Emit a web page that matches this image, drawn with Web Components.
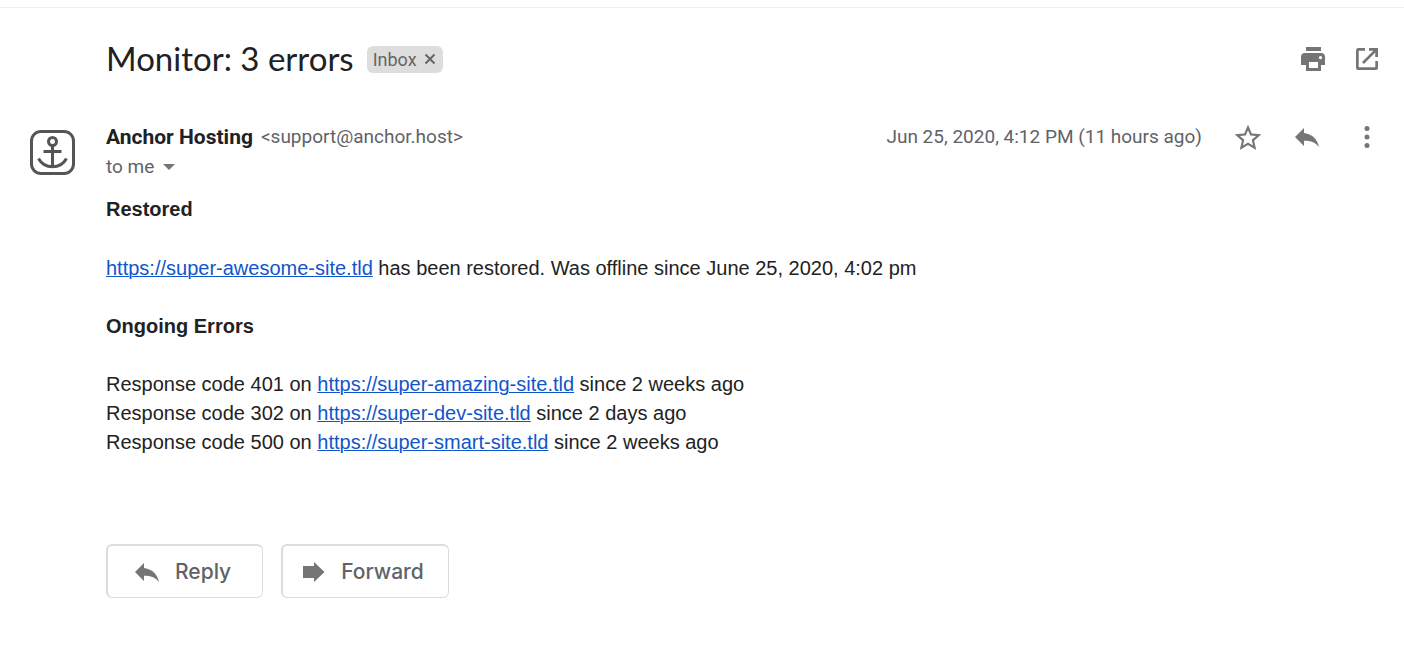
<!DOCTYPE html>
<html lang="en">
<head>
<meta charset="utf-8">
<meta name="viewport" content="width=device-width, initial-scale=1">
<title>Monitor: 3 errors</title>
<style>
body { margin: 0; background: #fff; color: #202124; font-family: Roboto, "Liberation Sans", sans-serif; }
</style>
</head>
<body>
<mail-thread></mail-thread>

<template id="icon-button">
<style>
:host { display: inline-flex; }
button { display: grid; place-items: center; width: 30px; height: 30px; padding: 0; border: 0; background: none; color: #757575; cursor: pointer; }
svg { display: block; fill: currentColor; }
</style>
<button type="button"></button>
</template>

<template id="mail-label">
<style>
:host { display: inline-flex; align-items: center; height: 27px; padding: 0 6px; gap: 6px; border-radius: 6px; background: #ddd; color: #666; font-size: 18px; line-height: 27px; }
button { display: grid; place-items: center; width: 14px; height: 27px; padding: 0; border: 0; background: none; color: inherit; cursor: pointer; }
svg { display: block; }
</style>
<slot></slot>
<button type="button" aria-label="Remove label"><svg width="14" height="14" viewBox="0 0 14 14" fill="none" stroke="currentColor" stroke-width="2"><path d="M2.500 2.500l9 9M11.500 2.500l-9 9"/></svg></button>
</template>

<template id="mail-subject">
<style>
:host { display: flex; align-items: center; justify-content: space-between; height: 42px; padding: 0 22px 0 106px; }
.subject, .tools { display: flex; align-items: center; }
.subject { gap: 13px; }
.tools { gap: 24px; }
h1 { margin: 0; padding-bottom: 2px; font: 400 33px/40px Lato, sans-serif; }
</style>
<div class="subject"><h1><slot></slot></h1><mail-label>Inbox</mail-label></div>
<div class="tools">
<icon-button name="print" label="Print all"></icon-button>
<icon-button name="open" label="In new window"></icon-button>
</div>
</template>

<template id="mail-sender">
<style>
:host { display: flex; align-items: flex-start; padding: 0 22px 0 30px; color: #5f6368; font-size: 19px; line-height: 30px; }
.avatar { flex: none; width: 45px; height: 45px; margin: 8px 31px 0 0; }
.who { flex: 1; }
.from { display: flex; align-items: center; gap: 8px; }
h2 { margin: 0; font: 700 21px/30px Roboto, sans-serif; color: #202124; }
.to { display: flex; align-items: center; gap: 9px; padding: 0; border: 0; background: none; font: inherit; color: inherit; cursor: pointer; }
.actions { display: flex; align-items: center; gap: 30px; }
svg { display: block; }
</style>
<svg class="avatar" viewBox="0 0 45 45" fill="none" stroke="#555" role="img" aria-label="Anchor Hosting">
<rect x="1.500" y="1.500" width="42" height="42" rx="9.500" stroke-width="3"/>
<circle cx="22.500" cy="11.500" r="4" stroke-width="3"/>
<path d="M22.500 15.500V37M13.500 21.500h18M8.500 28.500c6 11 22 11 28 0" stroke-width="3"/>
</svg>
<div class="who">
<div class="from"><h2>Anchor Hosting</h2><span>&lt;support@anchor.host&gt;</span></div>
<button class="to" type="button" aria-label="to me, show details">to me <svg width="12" height="6" viewBox="0 0 12 6" fill="#757575"><path d="M0 0h12L6 6z"/></svg></button>
</div>
<div class="actions">
<time datetime="2020-06-25T16:12">Jun 25, 2020, 4:12 PM (11 hours ago)</time>
<icon-button name="star" label="Star"></icon-button>
<icon-button name="reply" label="Reply"></icon-button>
<icon-button name="more" label="More"></icon-button>
</div>
</template>

<template id="mail-body">
<style>
:host { display: flex; flex-direction: column; gap: 29px; padding: 0 22px 0 106px; color: #222; font: 20px/29px "Liberation Sans", Arial, sans-serif; }
h3, p, ul { margin: 0; padding: 0; font-size: 20px; list-style: none; }
p { line-height: 30px; }
a { color: #15c; text-decoration: underline 1px; }
</style>
<h3>Restored</h3>
<p><a href="https://super-awesome-site.tld">https://super-awesome-site.tld</a> has been restored. Was offline since June 25, 2020, 4:02 pm</p>
<h3>Ongoing Errors</h3>
<ul>
<li>Response code 401 on <a href="https://super-amazing-site.tld">https://super-amazing-site.tld</a> since 2 weeks ago</li>
<li>Response code 302 on <a href="https://super-dev-site.tld">https://super-dev-site.tld</a> since 2 days ago</li>
<li>Response code 500 on <a href="https://super-smart-site.tld">https://super-smart-site.tld</a> since 2 weeks ago</li>
</ul>
</template>

<template id="mail-action">
<style>
:host { display: inline-flex; }
button { display: flex; align-items: center; gap: 16px; height: 54px; padding: 0 24px 0 20px; border: 2px solid #dadce0; border-right-width: 1px; border-bottom-width: 1px; border-radius: 6px; background: #fff; color: #5f6368; font: 500 21px/30px Inter, sans-serif; cursor: pointer; }
:host([name="reply"]) button { padding: 0 31px 0 27px; }
svg { display: block; fill: #757575; }
</style>
<button type="button"><span class="glyph"></span><slot></slot></button>
</template>

<template id="mail-thread">
<style>
:host { display: block; padding-top: 7px; }
.top { border-top: 1px solid #ececec; padding-top: 30px; }
mail-sender { margin-top: 42px; }
mail-body { margin-top: 13px; }
nav { display: flex; gap: 18px; padding: 87px 22px 64px 106px; }
</style>
<main class="top">
<mail-subject>Monitor: 3 errors</mail-subject>
<mail-sender></mail-sender>
<mail-body></mail-body>
<nav aria-label="Respond">
<mail-action name="reply">Reply</mail-action>
<mail-action name="forward">Forward</mail-action>
</nav>
</main>
</template>

<script>
const icons = {
  print: '<svg width="24" height="24" viewBox="0 0 24 24"><path d="M5 0h15v4H5zM4 6h16a4 4 0 0 1 4 4v8h-4v6H5v-6H0v-8a4 4 0 0 1 4-4zM8 15v6h9v-6zM19.500 9a1.600 1.600 0 1 0 .01 0z" fill-rule="evenodd"/></svg>',
  open: '<svg width="22" height="22" viewBox="0 0 22 22"><path d="M9 0v2.700H2.700v16.600h16.600V13H22v6.500a2.500 2.500 0 0 1-2.500 2.500h-17A2.500 2.500 0 0 1 0 19.500v-17A2.500 2.500 0 0 1 2.500 0zM13 0h9v9h-2.700V4.600L7.900 16 6 14.100 17.400 2.700H13z"/></svg>',
  star: '<svg width="32" height="32" viewBox="0 0 24 24"><path d="M22 9.240l-7.190-.62L12 2 9.190 8.630 2 9.240l5.460 4.730L5.820 21 12 17.270 18.180 21l-1.630-7.030L22 9.240zM12 15.400l-3.760 2.270 1-4.280-3.320-2.880 4.380-.38L12 6.100l1.710 4.040 4.380.38-3.320 2.880 1 4.280L12 15.400z"/></svg>',
  reply: '<svg width="24" height="20" viewBox="0 0 24 20"><path d="M9 6V1L0 10l9 9v-5.300c6.700 0 11.300 1.500 15 6.300C22.500 12.800 18 7.300 9 6z"/></svg>',
  more: '<svg width="30" height="30" viewBox="0 0 30 30"><circle cx="15" cy="6.500" r="2.500"/><circle cx="15" cy="15" r="2.500"/><circle cx="15" cy="23.500" r="2.500"/></svg>',
  forward: '<svg width="22" height="20" viewBox="0 0 22 20"><path d="M0 4h11V0l10.500 10L11 20v-4H0z"/></svg>'
};

class TemplateElement extends HTMLElement {
  constructor() {
    super();
    this.attachShadow({ mode: 'open' });
    this.shadowRoot.append(document.getElementById(this.localName).content.cloneNode(true));
  }
}

class IconButton extends TemplateElement {
  connectedCallback() {
    const button = this.shadowRoot.querySelector('button');
    button.setAttribute('aria-label', this.getAttribute('label'));
    button.innerHTML = icons[this.getAttribute('name')];
  }
}

class MailAction extends TemplateElement {
  connectedCallback() {
    this.shadowRoot.querySelector('.glyph').innerHTML = icons[this.getAttribute('name')];
  }
}

customElements.define('icon-button', IconButton);
customElements.define('mail-action', MailAction);
for (const name of ['mail-label', 'mail-subject', 'mail-sender', 'mail-body', 'mail-thread']) {
  customElements.define(name, class extends TemplateElement {});
}
</script>
</body>
</html>
